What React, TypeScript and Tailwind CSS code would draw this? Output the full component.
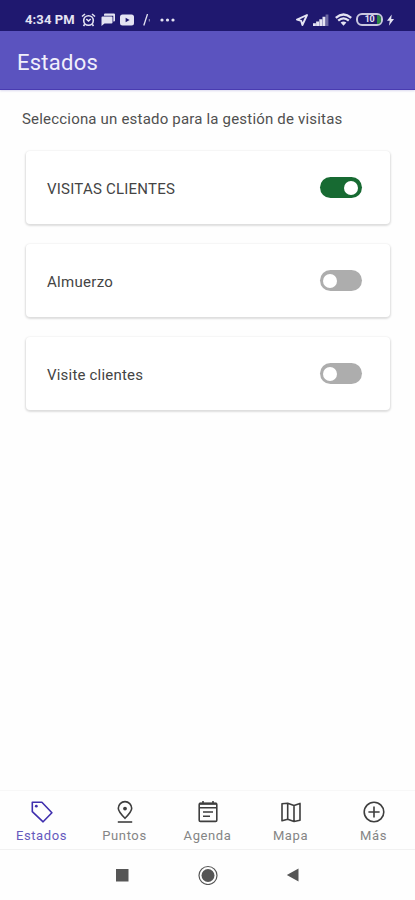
import React, { useState } from 'react';

interface Estado {
    id: number;
    name: string;
    textClass: string;
}

const estados: Estado[] = [
    { id: 1, name: 'VISITAS CLIENTES', textClass: 'tracking-[0.22px]' },
    { id: 2, name: 'Almuerzo', textClass: 'tracking-[0.3px]' },
    { id: 3, name: 'Visite clientes', textClass: 'tracking-[0.2px]' },
];

const StatusBar: React.FC = () => (
    <div className="flex h-[31px] shrink-0 items-center bg-[#1f186f] pt-2 pl-[25px] text-[#e4e3f3]">
        <span className="w-[50px] text-[13px] leading-4 font-bold tracking-[0.1px] whitespace-nowrap">4:34 PM</span>
        <svg className="ml-[6px]" width="15" height="14" viewBox="0 0 15 14" fill="none" stroke="currentColor" strokeWidth="1.6">
            <circle cx="7.5" cy="7.5" r="4.8" />
            <path d="M1 3.5 4 1M14 3.5 11 1M3.8 11.2 2.5 13M11.2 11.2l1.3 1.8M5.3 6l2.2 2 2.2-2" />
        </svg>
        <svg className="ml-[5px]" width="14" height="13" viewBox="0 0 14 13" fill="currentColor">
            <path d="M4 .5h9q1 0 1 1v6q0 1-1 1h-.7V2.8H3V1.5q0-1 1-1Z" />
            <path d="M1.5 3.6h9q1 0 1 1v5q0 1-1 1H3.5L.5 13V4.6q0-1 1-1Z" />
        </svg>
        <svg className="ml-[5px]" width="14" height="12" viewBox="0 0 14 12">
            <rect y=".5" width="14" height="11" rx="2.5" fill="currentColor" />
            <path d="m5.6 3.8 4 2.2-4 2.2Z" fill="#1f186f" />
        </svg>
        <svg className="ml-[9px]" width="8" height="12" viewBox="0 0 8 12" fill="none" stroke="currentColor">
            <path d="M4.5 0 .8 11.5" strokeWidth="1.3" />
            <path d="M6.3 5v2.5" strokeWidth="1" opacity=".6" />
        </svg>
        <svg className="ml-[9px]" width="15" height="4" viewBox="0 0 15 4" fill="currentColor">
            <circle cx="2" cy="2" r="1.6" />
            <circle cx="7.5" cy="2" r="1.6" />
            <circle cx="13" cy="2" r="1.6" />
        </svg>

        <div className="mr-[21px] ml-auto flex items-center">
            <svg width="12" height="12" viewBox="0 0 12 12" fill="none" stroke="currentColor" strokeWidth="1.9" strokeLinejoin="round">
                <path d="M11 1 1 5.7l4.2 1.2 1.2 4.1Z" />
            </svg>
            <svg className="ml-[5px]" width="16" height="12" viewBox="0 0 16 12" fill="currentColor">
                <path d="M0 9.2h2.9V12H0zM3.1 7.4H6V12H3.1zM6.3 5.2h2.9V12H6.3zM9.5 2.8h2.9V12H9.5z" />
                <path d="M12.6.5h2.8V12h-2.8z" opacity=".4" />
            </svg>
            <svg className="ml-[6px]" width="17" height="13" viewBox="0 0 17 13" fill="none" stroke="currentColor" strokeWidth="2.3">
                <path d="M.8 4.8q7.7-6.6 15.4 0M3.2 7.6q5.3-4.5 10.6 0" />
                <path d="m5.6 9.6 2.9 3.2 2.9-3.2q-2.9-2.4-5.8 0Z" fill="currentColor" stroke="none" />
            </svg>
            <div className="ml-[4px] flex h-[13px] w-[27px] items-center overflow-hidden rounded-[6px] border-2 border-[#c9c8df]">
                <span className="flex-1 pl-[4px] text-center text-[9px] leading-[9px] font-bold tracking-[-0.5px]">10</span>
                <span className="h-full w-[4px] bg-[#2d8a45]" />
            </div>
            <svg className="ml-[4px]" width="7" height="12" viewBox="0 0 7 12" fill="currentColor">
                <path d="M4.7.5 0 6.8h2.8l-.9 4.9L7 5.1H4.2Z" />
            </svg>
        </div>
    </div>
);

const Toggle: React.FC<{ checked: boolean; onChange: () => void; label: string }> = ({ checked, onChange, label }) => (
    <button
        type="button"
        role="switch"
        aria-checked={checked}
        aria-label={label}
        onClick={onChange}
        className={`flex h-[21px] w-[42px] items-center rounded-full pr-1 pl-[3px] ${checked ? 'justify-end bg-[#176a32]' : 'justify-start bg-[#adadad]'}`}
    >
        <span className="size-[14px] rounded-full bg-white" />
    </button>
);

const iconProps = { width: 24, height: 24, viewBox: '0 0 24 24', fill: 'none', stroke: 'currentColor', strokeWidth: 1.6 };

const tabs = [
    {
        label: 'Estados',
        icon: (
            <svg {...iconProps}>
                <path d="M2.3 2.3h9.6l10 10.5-8.8 9L2.3 11.7Z" strokeLinejoin="round" />
                <circle cx="6.3" cy="6.2" r="1.4" fill="currentColor" stroke="none" />
            </svg>
        ),
    },
    {
        label: 'Puntos',
        icon: (
            <svg {...iconProps}>
                <path d="M12 18.3C8.2 14.5 5.3 11.5 5.3 8.3a6.7 6.7 0 0 1 13.4 0c0 3.2-2.9 6.2-6.7 10Z" />
                <circle cx="12" cy="8.6" r="1.9" fill="currentColor" stroke="none" />
                <path d="M4.8 22h14.4" />
            </svg>
        ),
    },
    {
        label: 'Agenda',
        icon: (
            <svg {...iconProps}>
                <rect x="3.2" y="3.4" width="17.6" height="18" rx="1.2" />
                <path d="M3.2 7.8h17.6M7 1v3M17 1v3M7 12h10M7 16.3h7" />
                <path d="M3.2 3.8h17.6" strokeWidth="2" />
            </svg>
        ),
    },
    {
        label: 'Mapa',
        icon: (
            <svg {...iconProps}>
                <path d="m3 3.8 5.7-.6 6.3 2.2 6-2v16.8l-6 1.3-6.3-2.2L3 20.8ZM8.7 3.2v16.1M15 5.4v16.1" strokeLinejoin="round" />
            </svg>
        ),
    },
    {
        label: 'Más',
        icon: (
            <svg {...iconProps}>
                <circle cx="12" cy="12" r="9.8" />
                <path d="M12 6.4v11.2M6.4 12h11.2" />
            </svg>
        ),
    },
];

const App: React.FC = () => {
    const [active, setActive] = useState<number | null>(1);
    const [tab, setTab] = useState('Estados');

    return (
        <div className="flex h-screen w-full flex-col bg-[#fefefe] font-[Roboto,sans-serif]">
            <StatusBar />
            <header className="flex h-[59px] shrink-0 items-center border-b border-[#493bb1] bg-[#5b53bf] pt-[5px] pl-[17px] shadow-[0_1px_2px_rgba(80,70,180,0.2)]">
                <h1 className="text-[22px] leading-7 tracking-[0.25px] text-[#f1effb]">Estados</h1>
            </header>

            <main className="flex-1 pr-[25px] pl-[26px]">
                <p className="-ml-1 pt-[19px] text-[15px] leading-5 tracking-[0.19px] whitespace-nowrap text-[#505050]">
                    Selecciona un estado para la gestión de visitas
                </p>
                <div className="mt-[22px] flex flex-col gap-5">
                    {estados.map(e => (
                        <div
                            key={e.id}
                            className="flex h-[73px] items-center justify-between rounded-[4px] bg-white pr-7 pl-[21px] shadow-[0_1px_2px_1px_rgba(0,0,0,0.13)]"
                        >
                            <span className={`pt-0.5 text-[15px] leading-5 text-[#444444] ${e.textClass}`}>{e.name}</span>
                            <Toggle
                                label={e.name}
                                checked={active === e.id}
                                onChange={() => setActive(active === e.id ? null : e.id)}
                            />
                        </div>
                    ))}
                </div>
            </main>

            <nav className="flex h-[60px] shrink-0 border-t border-b border-t-[#f7f7f7] border-b-[#f1f1f1]">
                {tabs.map(t => (
                    <button
                        key={t.label}
                        type="button"
                        onClick={() => setTab(t.label)}
                        className={`flex flex-1 flex-col items-center pt-[9px] ${tab === t.label ? 'text-[#3f2fae]' : 'text-[#3e3e3e]'}`}
                    >
                        {t.icon}
                        <span
                            className={`mt-1 text-[13px] leading-4 tracking-[0.6px] ${tab === t.label ? 'text-[#6559bd]' : 'text-[#858585]'}`}
                        >
                            {t.label}
                        </span>
                    </button>
                ))}
            </nav>

            <div className="flex h-[50px] shrink-0 items-center justify-center gap-[68px] text-[#565656]">
                <svg width="14" height="14" viewBox="0 0 14 14" fill="currentColor">
                    <rect y="1" width="12.5" height="12.5" />
                </svg>
                <svg width="20" height="20" viewBox="0 0 20 20">
                    <circle cx="10" cy="10.5" r="9" fill="none" stroke="currentColor" strokeWidth="1.2" />
                    <circle cx="10" cy="10.5" r="6.5" fill="currentColor" />
                </svg>
                <svg width="14" height="14" viewBox="0 0 14 14" fill="currentColor">
                    <path d="M12.5.5v13L.8 7Z" />
                </svg>
            </div>
        </div>
    );
};

export default App;
